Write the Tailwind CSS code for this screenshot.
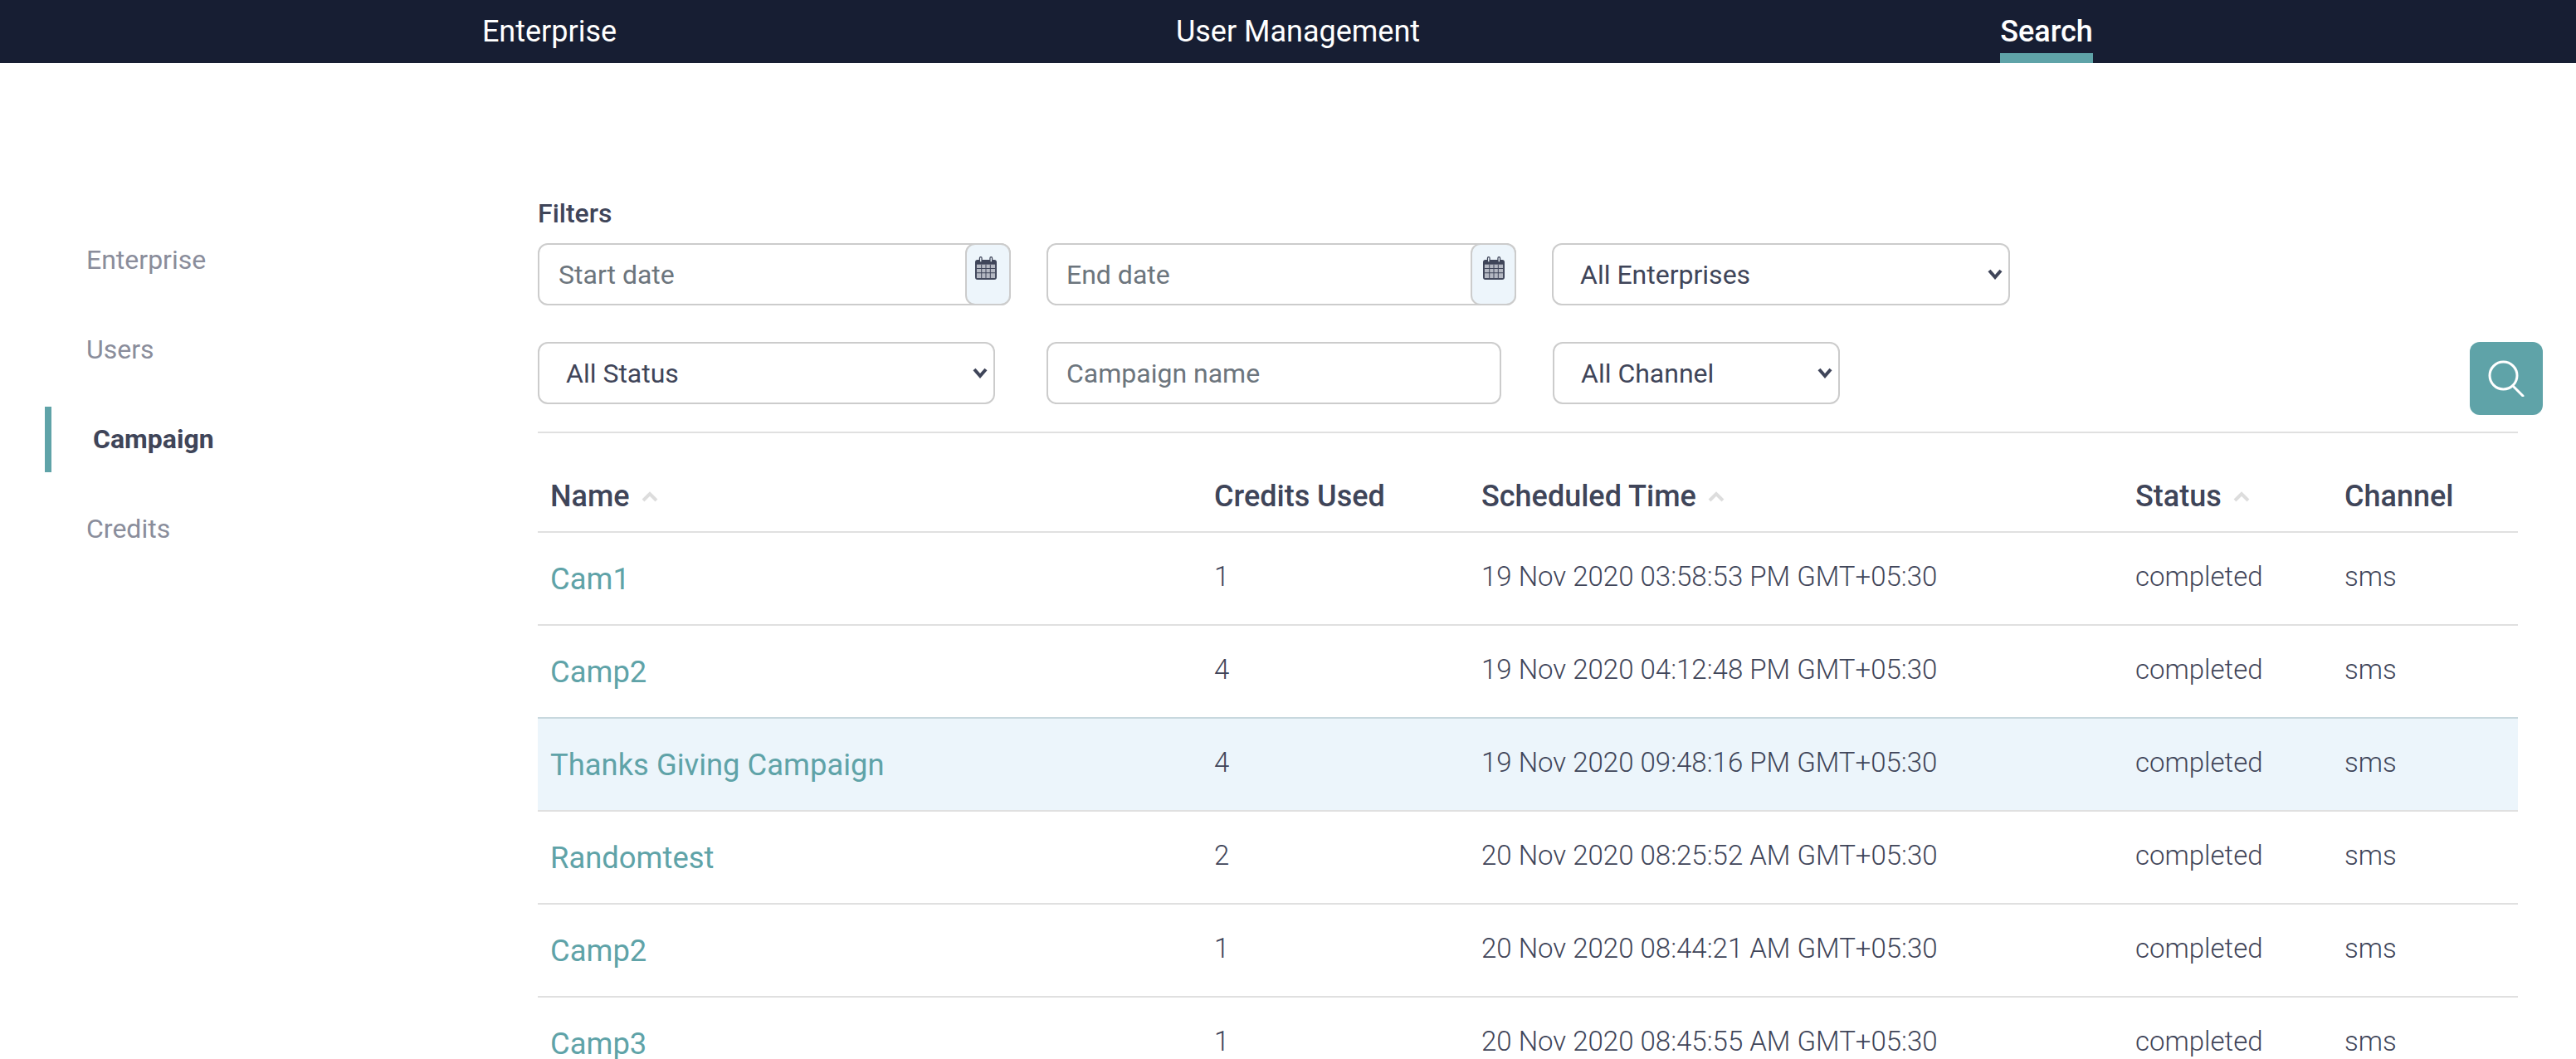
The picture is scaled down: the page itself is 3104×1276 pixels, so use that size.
<!DOCTYPE html>
<html lang="en">
<head>
<meta charset="utf-8">
<title>Campaign search</title>
<script src="https://cdn.jsdelivr.net/npm/@tailwindcss/browser@4"></script>
</head>
<body class="h-[1276px] w-[3104px] overflow-hidden bg-white font-['Roboto',sans-serif] text-[#3f4559]">
<header class="h-[76px] bg-[#171e33] text-white text-[36px]">
  <nav class="ml-[211px] grid w-[2706px] grid-cols-3 h-full">
    <div class="flex justify-center"><a class="h-full leading-[76px]">Enterprise</a></div>
    <div class="flex justify-center"><a class="h-full leading-[76px]">User Management</a></div>
    <div class="flex justify-center"><a class="relative h-full leading-[76px] font-medium">Search<span class="absolute left-0 right-0 bottom-0 h-[12px] bg-[#5fa3a8]"></span></a></div>
  </nav>
</header>
<div class="flex">
  <aside class="w-[648px] shrink-0 pt-[197px] pl-[54px] text-[32px] text-[#8a8d9b]">
    <ul class="flex flex-col">
      <li class="h-[80px] mb-[28px] flex items-center pl-[50px]">Enterprise</li>
      <li class="h-[80px] mb-[29px] flex items-center pl-[50px]">Users</li>
      <li class="h-[79px] mb-[28px] flex items-center pl-[50px] pb-[2px] border-l-[8px] border-[#5fa3a8] font-bold text-[#3f4559]">Campaign</li>
      <li class="h-[80px] flex items-center pl-[50px]">Credits</li>
    </ul>
  </aside>
  <main class="flex-1 pt-[163px] pr-[40px]">
    <div class="text-[32px] font-medium leading-[36px] mb-[18px]">Filters</div>
    <div class="flex gap-[43px] h-[75px] mb-[44px] text-[32px]">
      <div class="w-[570px] h-full relative">
        <input placeholder="Start date" class="w-full h-full border-2 border-[#cccccc] rounded-[12px] pl-[23px] placeholder:text-[#6c757d] bg-white">
        <div class="absolute right-0 top-0 w-[55px] h-full bg-[#edf5fb] border-2 border-[#cccccc] rounded-[12px] flex justify-center pt-[14px] pr-[5px]">
          <svg width="26" height="28" viewBox="0 0 27 29" fill="#3f4559"><path d="M7 0a2 2 0 0 1 2 2v2h9V2a2 2 0 0 1 4 0v2h2a3 3 0 0 1 3 3v19a3 3 0 0 1-3 3H3a3 3 0 0 1-3-3V7a3 3 0 0 1 3-3h2V2a2 2 0 0 1 2-2z"/><path fill="#edf5fb" d="M6.300 1.500h1.400v5h-1.400zM19.300 1.500h1.400v5h-1.400z"/><path fill="#b4b8c2" d="M2 10h23v17H2z"/><path fill="#3f4559" d="M2 14.500h23v1H2zM2 20h23v1H2zM7.500 10h1v17h-1zM13 10h1v17h-1zM18.500 10h1v17h-1z"/></svg>
        </div>
      </div>
      <div class="w-[566px] h-full relative">
        <input placeholder="End date" class="w-full h-full border-2 border-[#cccccc] rounded-[12px] pl-[22px] placeholder:text-[#6c757d] bg-white">
        <div class="absolute right-0 top-0 w-[55px] h-full bg-[#edf5fb] border-2 border-[#cccccc] rounded-[12px] flex justify-center pt-[14px]">
          <svg width="26" height="28" viewBox="0 0 27 29" fill="#3f4559"><path d="M7 0a2 2 0 0 1 2 2v2h9V2a2 2 0 0 1 4 0v2h2a3 3 0 0 1 3 3v19a3 3 0 0 1-3 3H3a3 3 0 0 1-3-3V7a3 3 0 0 1 3-3h2V2a2 2 0 0 1 2-2z"/><path fill="#edf5fb" d="M6.300 1.500h1.400v5h-1.400zM19.300 1.500h1.400v5h-1.400z"/><path fill="#b4b8c2" d="M2 10h23v17H2z"/><path fill="#3f4559" d="M2 14.500h23v1H2zM2 20h23v1H2zM7.500 10h1v17h-1zM13 10h1v17h-1zM18.500 10h1v17h-1z"/></svg>
        </div>
      </div>
      <div class="w-[552px] h-full relative">
        <select class="appearance-none w-full h-full border-2 border-[#cccccc] rounded-[12px] pl-[32px] pt-[1px] bg-white"><option>All Enterprises</option></select>
        <svg class="absolute right-[9px] top-[31px]" width="18" height="13" viewBox="0 0 18 13" fill="none" stroke="#3f4559" stroke-width="4"><path d="M2 2l7 8 7-8"/></svg>
      </div>
    </div>
    <div class="flex gap-[62px] h-[75px] text-[32px] relative">
      <div class="w-[551px] h-full relative">
        <select class="appearance-none w-full h-full border-2 border-[#cccccc] rounded-[12px] pl-[32px] pt-[1px] bg-white"><option>All Status</option></select>
        <svg class="absolute right-[9px] top-[31px]" width="18" height="13" viewBox="0 0 18 13" fill="none" stroke="#3f4559" stroke-width="4"><path d="M2 2l7 8 7-8"/></svg>
      </div>
      <input placeholder="Campaign name" class="w-[548px] h-full border-2 border-[#cccccc] rounded-[12px] pl-[22px] placeholder:text-[#6c757d] bg-white">
      <div class="w-[346px] h-full relative">
        <select class="appearance-none w-full h-full border-2 border-[#cccccc] rounded-[12px] pl-[32px] pt-[1px] bg-white"><option>All Channel</option></select>
        <svg class="absolute right-[9px] top-[31px]" width="18" height="13" viewBox="0 0 18 13" fill="none" stroke="#3f4559" stroke-width="4"><path d="M2 2l7 8 7-8"/></svg>
      </div>
      <button class="absolute right-0 top-0 w-[88px] h-[88px] rounded-[12px] bg-[#5fa3a8] flex items-center justify-center">
        <svg width="44" height="44" viewBox="0 0 44 44" fill="none" stroke="#ffffff" stroke-width="3" stroke-linecap="round"><circle cx="18.500" cy="18.500" r="16.500"/><path d="M30 31l12 12"/></svg>
      </button>
    </div>
    <table class="mt-[33px] w-[2386px] table-fixed border-separate border-spacing-0 text-[33px] font-light text-left">
      <colgroup><col class="w-[799px]"><col class="w-[322px]"><col class="w-[789px]"><col class="w-[251px]"><col class="w-[225px]"></colgroup>
      <thead class="text-[36px]">
        <tr class="h-[120px]">
          <th class="font-medium border-t-2 border-[#e0e0e0] pl-[15px] pr-[16px] pt-[34px]"><span class="inline-flex items-center gap-[14px]">Name<svg width="20" height="13" viewBox="0 0 20 13" fill="none" stroke="#dddddd" stroke-width="4"><path d="M2 11l8-8 8 8"/></svg></span></th>
          <th class="font-medium border-t-2 border-[#e0e0e0] px-[16px] pt-[34px]">Credits Used</th>
          <th class="font-medium border-t-2 border-[#e0e0e0] px-[16px] pt-[34px]"><span class="inline-flex items-center gap-[14px]">Scheduled Time<svg width="20" height="13" viewBox="0 0 20 13" fill="none" stroke="#dddddd" stroke-width="4"><path d="M2 11l8-8 8 8"/></svg></span></th>
          <th class="font-medium border-t-2 border-[#e0e0e0] pl-[15px] pr-[16px] pt-[34px]"><span class="inline-flex items-center gap-[14px]">Status<svg width="20" height="13" viewBox="0 0 20 13" fill="none" stroke="#dddddd" stroke-width="4"><path d="M2 11l8-8 8 8"/></svg></span></th>
          <th class="font-medium border-t-2 border-[#e0e0e0] px-[16px] pt-[34px]">Channel</th>
        </tr>
      </thead>
      <tbody>
        <tr class="h-[112px]">
          <td class="border-t-2 border-[#e0e0e0] pl-[15px] pr-[16px] pt-[2px] text-[36.400px] font-normal text-[#5fa3a8]">Cam1</td>
          <td class="border-t-2 border-[#e0e0e0] px-[16px] pb-[5px]">1</td>
          <td class="border-t-2 border-[#e0e0e0] px-[16px] pb-[5px]">19 Nov 2020 03:58:53 PM GMT+05:30</td>
          <td class="border-t-2 border-[#e0e0e0] pl-[15px] pr-[16px] pb-[5px]">completed</td>
          <td class="border-t-2 border-[#e0e0e0] px-[16px] pb-[5px]">sms</td>
        </tr>
        <tr class="h-[112px]">
          <td class="border-t-2 border-[#e0e0e0] pl-[15px] pr-[16px] pt-[2px] text-[36.400px] font-normal text-[#5fa3a8]">Camp2</td>
          <td class="border-t-2 border-[#e0e0e0] px-[16px] pb-[5px]">4</td>
          <td class="border-t-2 border-[#e0e0e0] px-[16px] pb-[5px]">19 Nov 2020 04:12:48 PM GMT+05:30</td>
          <td class="border-t-2 border-[#e0e0e0] pl-[15px] pr-[16px] pb-[5px]">completed</td>
          <td class="border-t-2 border-[#e0e0e0] px-[16px] pb-[5px]">sms</td>
        </tr>
        <tr class="h-[112px] bg-[#ecf5fb]">
          <td class="border-t-2 border-[#c8d8de] pl-[15px] pr-[16px] pt-[2px] text-[36.400px] font-normal text-[#5fa3a8]">Thanks Giving Campaign</td>
          <td class="border-t-2 border-[#c8d8de] px-[16px] pb-[5px]">4</td>
          <td class="border-t-2 border-[#c8d8de] px-[16px] pb-[5px]">19 Nov 2020 09:48:16 PM GMT+05:30</td>
          <td class="border-t-2 border-[#c8d8de] pl-[15px] pr-[16px] pb-[5px]">completed</td>
          <td class="border-t-2 border-[#c8d8de] px-[16px] pb-[5px]">sms</td>
        </tr>
        <tr class="h-[112px]">
          <td class="border-t-2 border-[#e0e0e0] pl-[15px] pr-[16px] pt-[2px] text-[36.400px] font-normal text-[#5fa3a8]">Randomtest</td>
          <td class="border-t-2 border-[#e0e0e0] px-[16px] pb-[5px]">2</td>
          <td class="border-t-2 border-[#e0e0e0] px-[16px] pb-[5px]">20 Nov 2020 08:25:52 AM GMT+05:30</td>
          <td class="border-t-2 border-[#e0e0e0] pl-[15px] pr-[16px] pb-[5px]">completed</td>
          <td class="border-t-2 border-[#e0e0e0] px-[16px] pb-[5px]">sms</td>
        </tr>
        <tr class="h-[112px]">
          <td class="border-t-2 border-[#e0e0e0] pl-[15px] pr-[16px] pt-[2px] text-[36.400px] font-normal text-[#5fa3a8]">Camp2</td>
          <td class="border-t-2 border-[#e0e0e0] px-[16px] pb-[5px]">1</td>
          <td class="border-t-2 border-[#e0e0e0] px-[16px] pb-[5px]">20 Nov 2020 08:44:21 AM GMT+05:30</td>
          <td class="border-t-2 border-[#e0e0e0] pl-[15px] pr-[16px] pb-[5px]">completed</td>
          <td class="border-t-2 border-[#e0e0e0] px-[16px] pb-[5px]">sms</td>
        </tr>
        <tr class="h-[112px]">
          <td class="border-t-2 border-[#e0e0e0] pl-[15px] pr-[16px] pt-[2px] text-[36.400px] font-normal text-[#5fa3a8]">Camp3</td>
          <td class="border-t-2 border-[#e0e0e0] px-[16px] pb-[5px]">1</td>
          <td class="border-t-2 border-[#e0e0e0] px-[16px] pb-[5px]">20 Nov 2020 08:45:55 AM GMT+05:30</td>
          <td class="border-t-2 border-[#e0e0e0] pl-[15px] pr-[16px] pb-[5px]">completed</td>
          <td class="border-t-2 border-[#e0e0e0] px-[16px] pb-[5px]">sms</td>
        </tr>
      </tbody>
    </table>
  </main>
</div>
</body>
</html>
